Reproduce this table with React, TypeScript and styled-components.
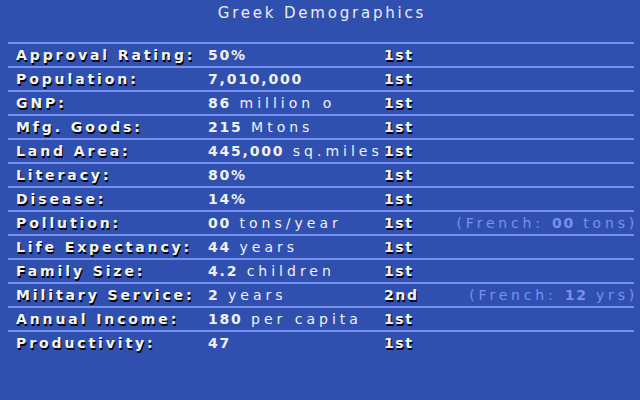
import React from "react";
import styled, { createGlobalStyle } from "styled-components";

const GlobalStyle = createGlobalStyle`
  html, body {
    margin: 0;
    padding: 0;
    background: #3050b0;
  }
  body {
    width: 640px;
    height: 400px;
    overflow: hidden;
    font-family: "DejaVu Sans", "Verdana", sans-serif;
  }
`;

const Screen = styled.div`
  width: 640px;
  height: 400px;
  background: #3050b0;
  box-sizing: border-box;
  padding: 0 6px 0 8px;
`;

const Title = styled.h1`
  margin: 0;
  height: 42px;
  box-sizing: border-box;
  padding-top: 4px;
  padding-left: 2px;
  text-align: center;
  font-family: "DejaVu Sans", sans-serif;
  font-weight: normal;
  font-size: 15px;
  letter-spacing: 2.8px;
  color: #ececec;
  line-height: 18px;
`;

const Table = styled.div`
  display: flex;
  flex-direction: column;
`;

const Row = styled.div`
  display: grid;
  grid-template-columns: 192px 176px 60px 1fr;
  align-items: center;
  height: 22px;
  border-top: 2px solid #7890f0;
  padding-left: 8px;
`;

const Label = styled.span`
  font-weight: bold;
  font-size: 14px;
  letter-spacing: 2.9px;
  color: #f4f4f4;
  text-shadow: 1px 2px 0 #000;
  white-space: nowrap;
`;

const Value = styled.span`
  font-size: 14px;
  letter-spacing: 4px;
  color: #f0f0f0;
  white-space: nowrap;
`;

const Num = styled.b`
  font-weight: bold;
  letter-spacing: 1.8px;
`;

const Rank = styled.span`
  font-weight: bold;
  font-size: 14px;
  letter-spacing: 1.6px;
  color: #f4f4f4;
  text-shadow: 1px 2px 0 #000;
`;

const Compare = styled.span`
  justify-self: end;
  font-size: 14px;
  letter-spacing: 3.8px;
  color: #7890f0;
  white-space: nowrap;
  margin-right: -4px;
`;

type RowData = {
  label: string;
  num: string;
  rest?: string;
  rank: string;
  french?: [string, string, string];
};

const rows: RowData[] = [
  { label: "Approval Rating:", num: "50%", rank: "1st" },
  { label: "Population:", num: "7,010,000", rank: "1st" },
  { label: "GNP:", num: "86", rest: " million o", rank: "1st" },
  { label: "Mfg. Goods:", num: "215", rest: " Mtons", rank: "1st" },
  { label: "Land Area:", num: "445,000", rest: " sq.miles", rank: "1st" },
  { label: "Literacy:", num: "80%", rank: "1st" },
  { label: "Disease:", num: "14%", rank: "1st" },
  {
    label: "Pollution:",
    num: "00",
    rest: " tons/year",
    rank: "1st",
    french: ["(French: ", "00", " tons)"],
  },
  { label: "Life Expectancy:", num: "44", rest: " years", rank: "1st" },
  { label: "Family Size:", num: "4.2", rest: " children", rank: "1st" },
  {
    label: "Military Service:",
    num: "2",
    rest: " years",
    rank: "2nd",
    french: ["(French: ", "12", " yrs)"],
  },
  { label: "Annual Income:", num: "180", rest: " per capita", rank: "1st" },
  { label: "Productivity:", num: "47", rank: "1st" },
];

export default function App() {
  return (
    <>
      <GlobalStyle />
      <Screen>
        <Title>Greek Demographics</Title>
        <Table>
          {rows.map((r) => (
            <Row key={r.label}>
              <Label>{r.label}</Label>
              <Value>
                <Num>{r.num}</Num>
                {r.rest}
              </Value>
              <Rank>{r.rank}</Rank>
              {r.french ? (
                <Compare>
                  {r.french[0]}
                  <Num>{r.french[1]}</Num>
                  {r.french[2]}
                </Compare>
              ) : (
                <span />
              )}
            </Row>
          ))}
        </Table>
      </Screen>
    </>
  );
}
